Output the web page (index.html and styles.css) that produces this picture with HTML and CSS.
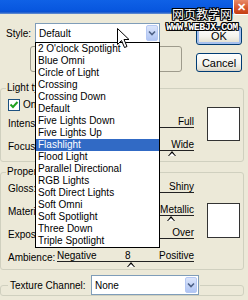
FILE: index.html
```html
<!DOCTYPE html>
<html>
  <head>
    <title>Lighting Effects</title>
    <link rel="stylesheet" href="styles.css">
  </head>
  <body>
    <div class="titlebar"><span class="close">✕</span></div>

    <div class="top">
      <div class="style-area">
        <div class="style-row">
          <span class="style-label">Style:</span>
          <div class="combo style-combo">
            <span class="combo-text">Default</span>
            <span class="combo-arrow"><svg width="8" height="6" viewBox="0 0 8 6"><path d="M1 1.5 L4 4.5 L7 1.5" fill="none" stroke="#4d6185" stroke-width="1.6"/></svg></span>
          </div>
        </div>
        <div class="panel"></div>
      </div>
      <div class="buttons">
        <button class="btn default">OK</button>
        <button class="btn">Cancel</button>
      </div>
    </div>

    <fieldset class="group light">
      <legend>Light type:</legend>
      <div class="group-body">
        <div class="rows">
          <div class="check-row">
            <span class="checkbox"><svg width="10" height="10" viewBox="0 0 10 10"><path d="M1.5 4.5 L4 7 L8.5 2" fill="none" stroke="#21a121" stroke-width="2"/></svg></span>
            <span>On</span>
          </div>
          <div class="row">
            <span class="row-label">Intensity:</span>
            <div class="slider">
              <div class="ends"><span>Full</span></div>
            </div>
          </div>
          <div class="row">
            <span class="row-label">Focus:</span>
            <div class="slider">
              <div class="ends"><span>Wide</span></div>
              <span class="thumb" style="left: 84%"></span>
            </div>
          </div>
        </div>
        <div class="swatch swatch-light"></div>
      </div>
    </fieldset>

    <fieldset class="group props">
      <legend>Properties:</legend>
      <div class="group-body">
        <div class="rows">
          <div class="row">
            <span class="row-label">Gloss:</span>
            <div class="slider">
              <div class="ends"><span>Shiny</span></div>
            </div>
          </div>
          <div class="row">
            <span class="row-label">Material:</span>
            <div class="slider">
              <div class="ends"><span>Metallic</span></div>
              <span class="thumb" style="left: 83%"></span>
            </div>
          </div>
          <div class="row">
            <span class="row-label">Exposure:</span>
            <div class="slider">
              <div class="ends"><span>Over</span></div>
            </div>
          </div>
          <div class="row">
            <span class="row-label">Ambience:</span>
            <div class="slider">
              <div class="ends spread"><span>Negative</span><span>8</span><span>Positive</span></div>
              <span class="thumb" style="left: 54%"></span>
            </div>
          </div>
        </div>
        <div class="swatch swatch-props"></div>
      </div>
    </fieldset>

    <fieldset class="group texture">
      <legend>
        <div class="texture-head">
          <span class="texture-label">Texture Channel:</span>
          <div class="combo texture-combo">
            <span class="combo-text">None</span>
            <span class="combo-arrow"><svg width="8" height="6" viewBox="0 0 8 6"><path d="M1 1.5 L4 4.5 L7 1.5" fill="none" stroke="#4d6185" stroke-width="1.6"/></svg></span>
          </div>
        </div>
      </legend>
    </fieldset>

    <!-- open dropdown of the Style combo -->
    <ul class="dropdown">
      <li>2 O'clock Spotlight</li>
      <li>Blue Omni</li>
      <li>Circle of Light</li>
      <li>Crossing</li>
      <li>Crossing Down</li>
      <li>Default</li>
      <li>Five Lights Down</li>
      <li>Five Lights Up</li>
      <li class="selected">Flashlight</li>
      <li>Flood Light</li>
      <li>Parallel Directional</li>
      <li>RGB Lights</li>
      <li>Soft Direct Lights</li>
      <li>Soft Omni</li>
      <li>Soft Spotlight</li>
      <li>Three Down</li>
      <li>Triple Spotlight</li>
    </ul>

    <div class="watermark">
      <div class="wm-cn">网页教学网</div>
      <div class="wm-url">WWW.WEBJX.COM</div>
    </div>

    <svg class="cursor" width="13" height="21" viewBox="0 0 13 21">
      <path d="M0.5 0.5 V16.5 L4.5 12.5 L7.5 19.5 L10 18.5 L7 11.5 H12 Z" fill="#fff" stroke="#000"/>
    </svg>
  </body>
</html>
```

FILE: styles.css
```css
body {
  margin: 0;
  width: 248px;
  height: 300px;
  overflow: hidden;
  position: relative;
  background-color: #ece9d8;
  font-family: "Liberation Sans", Arial, sans-serif;
  font-size: 10px;
  color: #000;
}
.titlebar {
  height: 14px;
  display: flex;
  justify-content: flex-end;
  background: linear-gradient(#0f61e6 0%, #0857df 70%, #0a50d0 85%, #6d93cf 100%);
}
.close {
  width: 17px;
  height: 15px;
  margin-right: -2px;
  box-sizing: border-box;
  border: 1px solid #fff;
  border-top: none;
  border-radius: 0 0 3px 3px;
  background: linear-gradient(#e88a68, #d5542a 60%, #c43e12);
  color: #fff;
  font-size: 11px;
  font-weight: bold;
  line-height: 14px;
  text-align: center;
}

/* top area: style combo + buttons */
.top {
  display: flex;
  height: 69px;
}
.style-area {
  padding: 9px 0 0 6px;
}
.style-row {
  display: flex;
  align-items: center;
}
.style-label {
  width: 29px;
}
.combo {
  display: flex;
  align-items: center;
  justify-content: space-between;
  box-sizing: border-box;
  height: 20px;
  border: 1px solid #7f9db9;
  background-color: #fff;
  padding: 0 1px 0 3px;
}
.style-combo {
  width: 125px;
}
.combo-arrow {
  width: 12px;
  height: 16px;
  box-sizing: border-box;
  border: 1px solid #b5c8f3;
  border-radius: 2px;
  background: linear-gradient(#dbe5fb, #c1d2f7 60%, #b0c5f3);
  display: flex;
  align-items: center;
  justify-content: center;
}
.panel {
  margin: 3px 0 0 24px;
  width: 152px;
  height: 26px;
  box-sizing: border-box;
  border: 1px solid #9e9b8c;
  border-radius: 3px;
}
.buttons {
  margin-left: auto;
  margin-right: 6px;
  padding-top: 12px;
  display: flex;
  flex-direction: column;
  gap: 8px;
}
.btn {
  width: 46px;
  height: 19px;
  padding: 0;
  font: inherit;
  font-size: 11px;
  color: #000;
  border: 1px solid #003c74;
  border-radius: 3px;
  background: linear-gradient(#ffffff, #f4f3ee 55%, #e6e3d6 85%, #d6d0c5);
}
.btn.default {
  box-shadow: inset 0 0 0 2px #a6c0ee;
}

/* group boxes */
.group {
  margin: 0 4px 0 0;
  padding: 0 0 0 7px;
  min-width: 0;
  border: 1px solid #d0d0bf;
  border-radius: 3px;
}
.group legend {
  margin-left: -2px;
  padding: 0 1px;
  line-height: 10px;
}
.light {
  padding-bottom: 3px;
}
.props {
  margin-top: 5px;
}
.texture {
  margin-top: 5px;
  height: 4px;
}
.group-body {
  display: grid;
  grid-template-columns: 186px 33px;
  column-gap: 13px;
}
.check-row {
  height: 19px;
  box-sizing: border-box;
  padding-top: 6px;
  display: flex;
  align-items: flex-start;
  gap: 3px;
}
.check-row span:last-child {
  line-height: 12px;
}
.checkbox {
  width: 12px;
  height: 12px;
  box-sizing: border-box;
  border: 1px solid #1c5180;
  background-color: #fff;
  display: flex;
  align-items: center;
  justify-content: center;
}
.row {
  display: grid;
  grid-template-columns: 49px 137px;
  height: 23px;
}
.row-label {
  padding-top: 6px;
  line-height: 11px;
  white-space: nowrap;
}
.slider {
  position: relative;
  margin-top: 4px;
  height: 11px;
  border-bottom: 1px solid #222;
}
.ends {
  display: flex;
  justify-content: flex-end;
  line-height: 11px;
}
.ends.spread {
  justify-content: space-between;
}
.thumb {
  position: absolute;
  top: 12px;
  margin-left: -4px;
  width: 0;
  height: 0;
  border-left: 4px solid transparent;
  border-right: 4px solid transparent;
  border-bottom: 5px solid #000;
}
.thumb::after {
  content: "";
  position: absolute;
  left: -3px;
  top: 1.5px;
  border-left: 3px solid transparent;
  border-right: 3px solid transparent;
  border-bottom: 3px solid #fff;
}
.swatch {
  width: 33px;
  box-sizing: border-box;
  border: 1px solid #333;
  background-color: #fff;
}
.swatch-light {
  margin-top: 14px;
  height: 34px;
}
.swatch-props {
  margin-top: 26px;
  height: 35px;
}
.texture legend {
  margin-left: 0;
  line-height: normal;
}
.texture-head {
  display: flex;
  align-items: center;
}
.texture-label {
  width: 81px;
  padding-left: 1px;
}
.texture-combo {
  width: 108px;
}

/* open list */
.dropdown {
  position: absolute;
  left: 35px;
  top: 42px;
  width: 125px;
  box-sizing: border-box;
  margin: 0;
  padding: 0;
  list-style: none;
  border: 1px solid #000;
  background-color: #fff;
}
.dropdown li {
  height: 12px;
  line-height: 12px;
  padding-left: 2px;
  white-space: nowrap;
}
.dropdown li.selected {
  background-color: #316ac5;
  color: #fff;
}

.watermark {
  position: absolute;
  left: 166px;
  top: 7px;
  width: 72px;
  text-align: center;
  color: #fff;
  text-shadow: 1px 0 #000, -1px 0 #000, 0 1px #000, 0 -1px #000,
    1px 1px #000, -1px -1px #000, 1px -1px #000, -1px 1px #000;
}
.wm-cn {
  font: 12px/13px "Noto Sans CJK SC", sans-serif;
}
.wm-url {
  margin-top: 3px;
  font: bold 10px/10px "Liberation Mono", monospace;
  letter-spacing: -0.5px;
}
.cursor {
  position: absolute;
  left: 117px;
  top: 28px;
}
```
